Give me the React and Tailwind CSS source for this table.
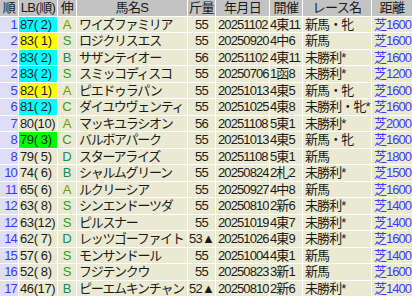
import React from 'react';

const rows = [
  ['1', '87( 2)', 'c', 'A', 'ワイズファミリア', '55', '20251102', '4東11', '新馬・牝', '芝1600'],
  ['2', '83( 1)', 'y', 'S', 'ロジクリスエス', '55', '20250920', '4中6', '新馬', '芝1600'],
  ['2', '83( 2)', 'c', 'B', 'サザンテイオー', '56', '20251102', '4東11', '未勝利*', '芝1600'],
  ['2', '83( 2)', 'c', 'S', 'スミッコディスコ', '55', '20250706', '1函8', '未勝利*', '芝1200'],
  ['5', '82( 1)', 'y', 'A', 'ピエドゥラパン', '55', '20251013', '4東5', '新馬・牝', '芝1600'],
  ['6', '81( 2)', 'c', 'C', 'ダイユウヴェンティ', '55', '20251025', '4東8', '未勝利・牝*', '芝1600'],
  ['7', '80(10)', '', 'A', 'マッキユラシオン', '56', '20251108', '5東1', '未勝利*', '芝2000'],
  ['8', '79( 3)', 'g', 'C', 'バルボアパーク', '55', '20251013', '4東5', '新馬・牝', '芝1600'],
  ['8', '79( 5)', '', 'D', 'スターアライズ', '55', '20251108', '5東1', '新馬', '芝1800'],
  ['10', '74( 6)', '', 'B', 'シャルムグリーン', '55', '20250824', '2札2', '未勝利*', '芝1500'],
  ['11', '65( 6)', '', 'A', 'ルクリーシア', '55', '20250927', '4中8', '新馬', '芝1600'],
  ['12', '63( 8)', '', 'S', 'シンエンドーツダ', '55', '20250810', '2新6', '未勝利*', '芝1400'],
  ['12', '63(12)', '', 'S', 'ピルスナー', '55', '20251019', '4東7', '未勝利*', '芝1400'],
  ['14', '62( 7)', '', 'D', 'レッツゴーファイト', '53▲', '20251026', '4東9', '未勝利*', '芝1600'],
  ['15', '57( 6)', '', 'S', 'モンサンドール', '55', '20251004', '4東1', '新馬', '芝1400'],
  ['16', '52( 8)', '', 'S', 'フジテンクウ', '55', '20250823', '3新1', '新馬', '芝1600'],
  ['17', '46(17)', '', 'B', 'ピーエムキンチャン', '52▲', '20250810', '2新6', '未勝利*', '芝1400'],
];

const lbBg = { c: 'bg-[#00ffff]', y: 'bg-[#ffff00]', g: 'bg-[#00ff00]', '': 'bg-[#eaead2]' };
const nobiColor = {
  A: 'text-[#6f9a00]',
  S: 'text-[#2f9a2f]',
  B: 'text-[#138a6e]',
  C: 'text-[#3f9a10]',
  D: 'text-[#138a6e]',
};

const heads = ['順', 'LB(順)', '伸', '馬名S', '斤量', '年月日', '開催', 'レース名', '距離'];

export default function App() {
  return (
    <div
      className="w-[412px] h-[297px] bg-white overflow-hidden text-[13px] leading-[15px] text-[#1a1a1a]"
      style={{ fontFamily: '"Liberation Sans", "Noto Sans CJK JP", sans-serif' }}
    >
      <div className="grid grid-cols-[18px_38px_18px_110px_27px_53px_32px_68px_40px] auto-rows-[15.5px] gap-px">
        {heads.map((h) => (
          <div key={h} className="bg-[#c3c3c3] flex items-center justify-center whitespace-nowrap tracking-[-0.6px]">
            {h}
          </div>
        ))}
        {rows.map((r, i) => (
          <React.Fragment key={i}>
            <div className="bg-[#dedef8] text-[#3a3aff] flex items-center justify-end pr-px tracking-[-0.8px]">{r[0]}</div>
            <div className={`${lbBg[r[2]]} flex items-center pl-px whitespace-pre tracking-[-0.4px]`}>{r[1]}</div>
            <div className={`bg-[#eaead2] ${nobiColor[r[3]]} flex items-center justify-center`}>{r[3]}</div>
            <div className="bg-[#eaead2] flex items-center pl-[2px] whitespace-nowrap overflow-hidden tracking-[-1.3px]">{r[4]}</div>
            <div className="bg-[#eaead2] flex items-center justify-center whitespace-nowrap tracking-[-0.8px]">{r[5]}</div>
            <div className="bg-[#eaead2] flex items-center pl-[2px] tracking-[-0.9px]">{r[6]}</div>
            <div className="bg-[#eaead2] flex items-center whitespace-nowrap tracking-[-0.9px]">{r[7]}</div>
            <div className="bg-[#eaead2] flex items-center pl-[2px] whitespace-nowrap tracking-[-0.9px]">{r[8]}</div>
            <div className="bg-[#eaead2] text-[#3a3aff] flex items-center justify-end pr-px tracking-[-1px]">{r[9]}</div>
          </React.Fragment>
        ))}
      </div>
    </div>
  );
}
